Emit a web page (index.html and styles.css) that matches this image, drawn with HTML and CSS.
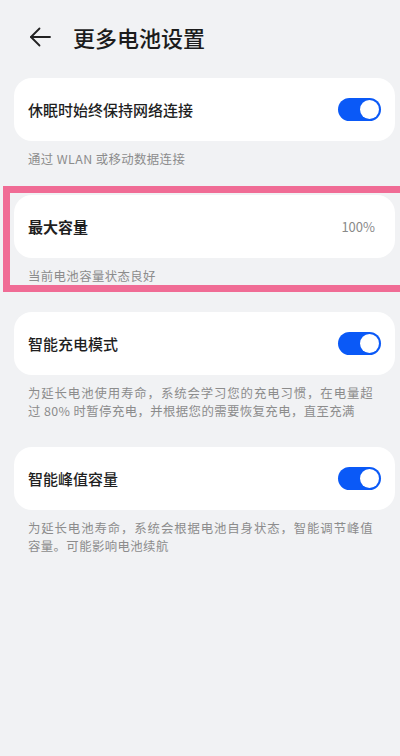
FILE: index.html
```html
<!DOCTYPE html>
<html lang="zh-CN">
<head>
<meta charset="utf-8">
<title>更多电池设置</title>
<link rel="stylesheet" href="styles.css">
</head>
<body>
<div class="page">
  <header class="header">
    <svg class="back" width="22" height="20" viewBox="0 0 22 20" fill="none" stroke="#222" stroke-width="1.8" stroke-linecap="round" stroke-linejoin="round">
      <path d="M21 10H2"/>
      <path d="M10.5 1.5L2 10l8.5 8.5"/>
    </svg>
    <h1 class="title">更多电池设置</h1>
  </header>

  <main class="list">
    <div class="card">
      <span class="label">休眠时始终保持网络连接</span>
      <span class="toggle"><span class="knob"></span></span>
    </div>
    <div class="desc">通过 WLAN 或移动数据连接</div>

    <div class="card">
      <span class="label strong">最大容量</span>
      <span class="value">100%</span>
    </div>
    <div class="desc">当前电池容量状态良好</div>

    <div class="card">
      <span class="label">智能充电模式</span>
      <span class="toggle"><span class="knob"></span></span>
    </div>
    <div class="desc"><span class="line full">为延长电池使用寿命，系统会学习您的充电习惯，在电量超</span><span class="line">过 80% 时暂停充电，并根据您的需要恢复充电，直至充满</span></div>

    <div class="card">
      <span class="label">智能峰值容量</span>
      <span class="toggle"><span class="knob"></span></span>
    </div>
    <div class="desc"><span class="line full">为延长电池寿命，系统会根据电池自身状态，智能调节峰值</span><span class="line">容量。可能影响电池续航</span></div>
  </main>

  <div class="highlight"></div>
</div>
</body>
</html>
```

FILE: styles.css
```css
html, body {
  margin: 0;
  padding: 0;
}

body {
  background: #f1f2f4;
  font-family: "Noto Sans CJK SC", "Noto Sans", "Liberation Sans", sans-serif;
  color: #1c1c1c;
  width: 400px;
  height: 756px;
  overflow: hidden;
}

.page {
  position: relative;
  width: 400px;
  height: 756px;
  overflow: hidden;
}

.header {
  height: 74px;
  display: flex;
  align-items: center;
  padding-left: 29px;
  gap: 22px;
  box-sizing: border-box;
}

.back {
  display: block;
  flex: none;
}

.title {
  margin: 0;
  font-size: 22px;
  font-weight: 500;
  line-height: 30px;
  color: #1c1c1c;
}

.list {
  padding: 4px 5px 0 14px;
}

.card {
  height: 63px;
  background: #ffffff;
  border-radius: 18px;
  display: flex;
  align-items: center;
  justify-content: space-between;
  padding: 0 14px;
  box-sizing: border-box;
}

.label {
  font-size: 15px;
  font-weight: 500;
  color: #1f1f1f;
}

.label.strong {
  font-weight: 700;
}

.value {
  font-size: 13px;
  color: #8a8a8a;
  padding-right: 6px;
}

.toggle {
  width: 43px;
  height: 23px;
  border-radius: 12px;
  background: #0a59f7;
  position: relative;
  flex: none;
}

.knob {
  position: absolute;
  top: 2px;
  right: 2px;
  width: 19px;
  height: 19px;
  border-radius: 50%;
  background: #ffffff;
}

.desc {
  padding: 9px 22px 0 14px;
  margin-bottom: 27px;
  font-size: 12.4px;
  line-height: 18px;
  color: #8c8c8c;
  letter-spacing: 0.4px;
}

.line {
  display: block;
  white-space: nowrap;
}

.line.full {
  text-align: justify;
  text-align-last: justify;
}

.highlight {
  position: absolute;
  left: 3px;
  top: 186px;
  width: 397px;
  height: 106px;
  border: 7px solid #f06c95;
  border-right: none;
  box-sizing: border-box;
  pointer-events: none;
}
```
